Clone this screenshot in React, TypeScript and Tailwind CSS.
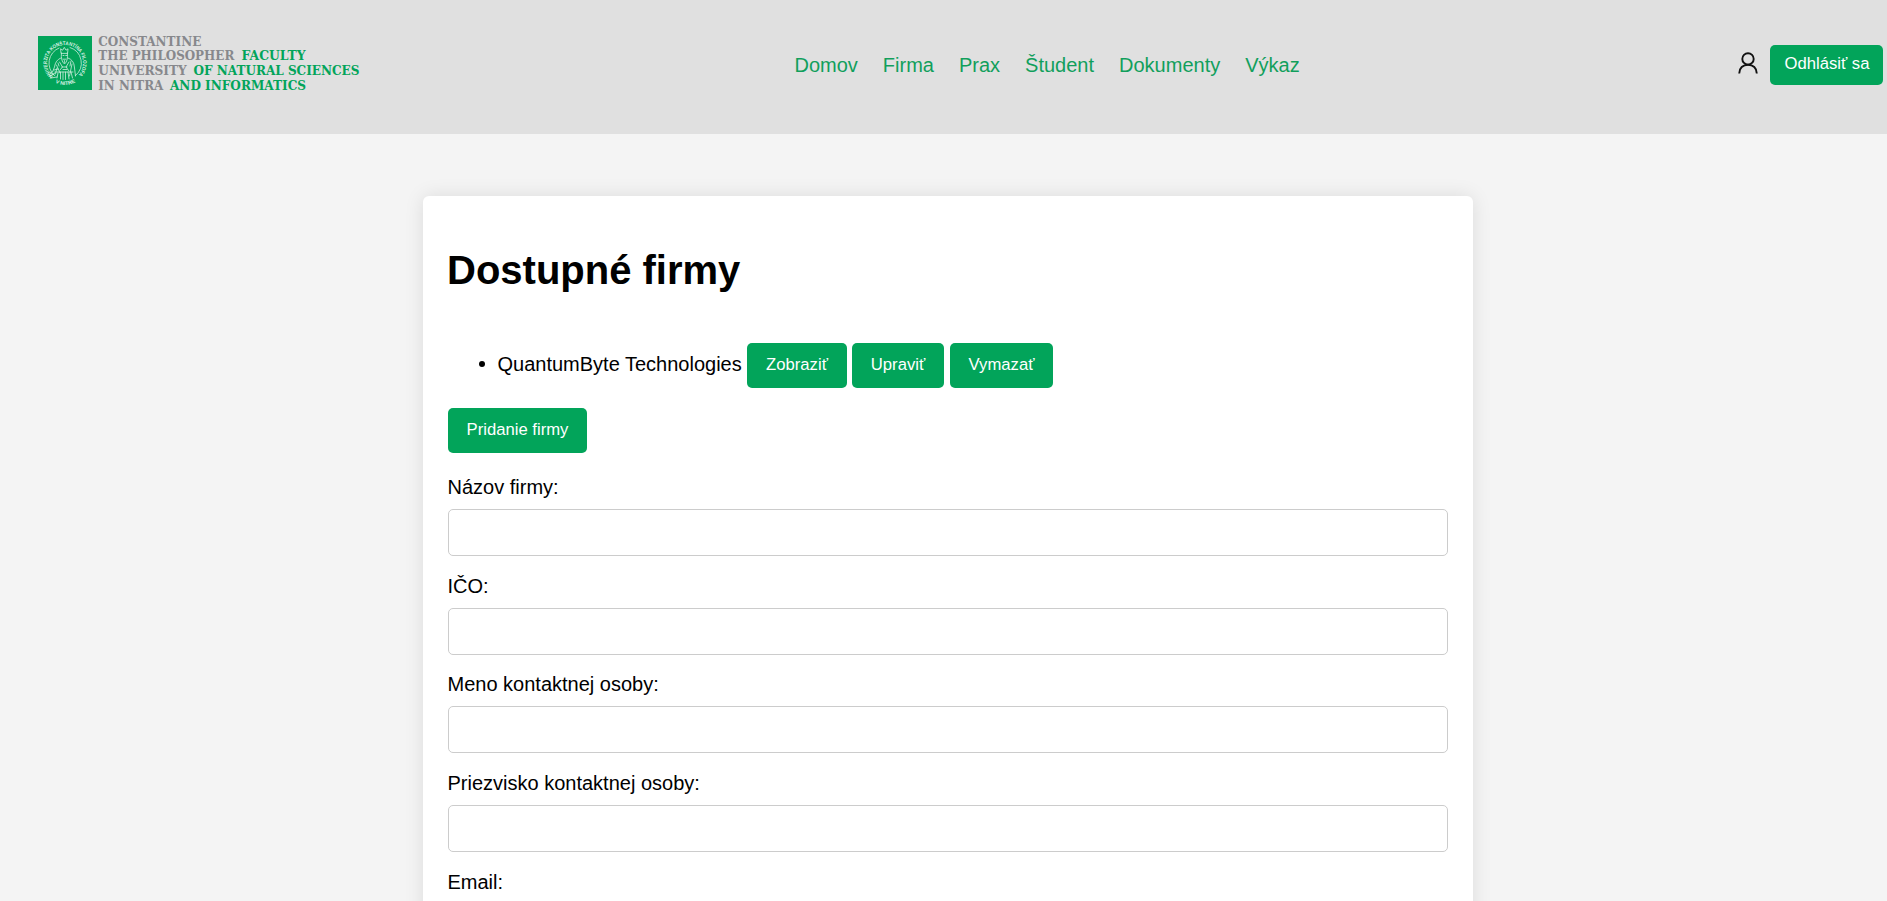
import React from "react";

const navItems = ["Domov", "Firma", "Prax", "Študent", "Dokumenty", "Výkaz"];
const fields = [
  "Názov firmy:",
  "IČO:",
  "Meno kontaktnej osoby:",
  "Priezvisko kontaktnej osoby:",
  "Email:",
];

const logoText: { x: number; y: number; w: number; green?: boolean; t: string }[] = [
  { x: 60.3, y: 9.7, w: 103, t: "CONSTANTINE" },
  { x: 60.3, y: 24.4, w: 136, t: "THE PHILOSOPHER" },
  { x: 203.5, y: 24.4, w: 64, green: true, t: "FACULTY" },
  { x: 60.3, y: 39.1, w: 88.5, t: "UNIVERSITY" },
  { x: 155.5, y: 39.1, w: 166, green: true, t: "OF NATURAL SCIENCES" },
  { x: 60.3, y: 53.8, w: 65, t: "IN NITRA" },
  { x: 132, y: 53.8, w: 136, green: true, t: "AND INFORMATICS" },
];

function Logo() {
  return (
    <svg width="340" height="72" viewBox="0 -8 340 72" className="shrink-0 overflow-visible">
      <rect x="0" y="0" width="54" height="54" fill="#02a45a" />
      <defs>
        <path id="ring" d="M 15 40.4 A 18 18 0 1 1 39 40.4" />
        <path id="ringBottom" d="M 13 44 A 22 22 0 0 0 41 44" />
      </defs>
      <g fill="#d9f2e5" fontFamily="Liberation Sans" fontSize="5.2" fontWeight="bold">
        <text textLength="84" lengthAdjust="spacingAndGlyphs">
          <textPath href="#ring">UNIVERZITA KONŠTANTÍNA FILOZOFA</textPath>
        </text>
        <text textLength="21" lengthAdjust="spacingAndGlyphs">
          <textPath href="#ringBottom" startOffset="5">V NITRE</textPath>
        </text>
      </g>
      <g fill="none" stroke="#d9f2e5" strokeWidth="0.75" strokeLinecap="round">
        <path d="M16.5 39.5A16.3 16.3 0 0 1 21 12M32 11.5A16.3 16.3 0 0 1 37.5 39.5" />
        <path d="M23 17L22.6 12.8L24.6 14.2L26.3 11.4L28 14.2L30 12.8L29.6 17Z" />
        <path d="M23.4 17Q22.6 25 26.5 28Q30.3 25 29.4 17M25 19.5h1M27.7 19.5h1M25 23.2h3M26.4 24.5v2" />
        <path d="M22.8 22Q17.5 24 16.5 31L14.5 36L11.5 38.5L13 42L19 41M30 22Q36 24 36.4 31L37.5 40" />
        <path d="M21.5 26L24.5 31L22 34M31 26L28 31L31 35M18.5 29L22 37M34 28L31.5 40M17 36H35M16 34L20 33M19 32L17.5 38" />
        <path d="M20 37L19 42M22.5 36V43M25 36V43.5M27.5 36V43.5M30 36L31 43M33 36L34.5 42" />
        <path d="M12 36L16 39M12 40L17 37M24 31h5M25 33.5h4M20 27l1 3M33 25l-1 5" />
      </g>
      <g fontFamily="DejaVu Serif" fontSize="13.4" fontWeight="bold">
        {logoText.map((l) => (
          <text
            key={l.t}
            x={l.x}
            y={l.y}
            textLength={l.w}
            lengthAdjust="spacingAndGlyphs"
            fill={l.green ? "#02a45a" : "#87888c"}
          >
            {l.t}
          </text>
        ))}
      </g>
    </svg>
  );
}

function UserIcon() {
  return (
    <svg width="20" height="24" viewBox="0 0 20 24" fill="none" stroke="#111" strokeWidth="1.9" className="shrink-0">
      <circle cx="10" cy="7.9" r="5.7" />
      <path d="M1.2 22.5C1.2 17 5 13.7 10 13.7S18.8 17 18.8 22.5" />
    </svg>
  );
}

function ActionButton({ children, className = "" }: { children: React.ReactNode; className?: string }) {
  return (
    <button
      className={`h-[45px] shrink-0 rounded-[5px] bg-[#02a45a] pb-px text-center text-[16.67px] leading-5 whitespace-nowrap text-white ${className}`}
    >
      {children}
    </button>
  );
}

export default function App() {
  return (
    <div className="h-[901px] overflow-hidden bg-[#f4f4f4] font-['Liberation_Sans',Arial,sans-serif] text-black">
      <header className="flex h-[134px] items-start justify-between bg-[#e0e0e0] pr-1 pl-[38px]">
        <div className="w-[756px] pt-7">
          <Logo />
        </div>
        <nav className="flex flex-1 gap-[25px] pt-[54px] pl-[0.5px] text-[20px] leading-[23px] text-[#119f5c]">
          {navItems.map((n) => (
            <a key={n} href="#">
              {n}
            </a>
          ))}
        </nav>
        <div className="flex items-start gap-3 pt-[45px]">
          <div className="pt-[6px]">
            <UserIcon />
          </div>
          <button className="h-10 w-[113px] rounded-[5px] bg-[#02a45a] pb-[2px] pl-px text-[16.67px] leading-5 whitespace-nowrap text-white">
            Odhlásiť sa
          </button>
        </div>
      </header>

      <main className="mt-[62px] ml-[423px] h-[900px] w-[1050px] rounded-[6px] bg-white px-[25px] pt-[51px] shadow-[0_0_18.75px_rgba(0,0,0,0.1)]">
        <h1 className="-ml-px text-[40px] leading-[46px] font-bold">Dostupné firmy</h1>

        <ul className="mt-[50px] flex">
          <li className="flex h-[45px] items-start">
            <span className="mt-[18px] ml-[31px] size-[6px] rounded-full bg-black" />
            <span className="mt-[10px] ml-[12.5px] w-[249.5px] text-[20px] leading-[23px] whitespace-nowrap">
              QuantumByte Technologies
            </span>
            <ActionButton className="w-[100px]">Zobraziť</ActionButton>
            <ActionButton className="ml-[5px] w-[92px]">Upraviť</ActionButton>
            <ActionButton className="ml-[6px] w-[103px]">Vymazať</ActionButton>
          </li>
        </ul>

        <ActionButton className="mt-5 block w-[139px]">Pridanie firmy</ActionButton>

        <form className="mt-[23px]">
          {fields.map((f) => (
            <label key={f} className="block h-[98.7px] text-[20px] leading-[23px]">
              <span className="-ml-[0.5px]">{f}</span>
              <input className="mt-[10px] block h-[47px] w-full rounded-[5px] border border-[#ccc] bg-white px-3" />
            </label>
          ))}
        </form>
      </main>
    </div>
  );
}
